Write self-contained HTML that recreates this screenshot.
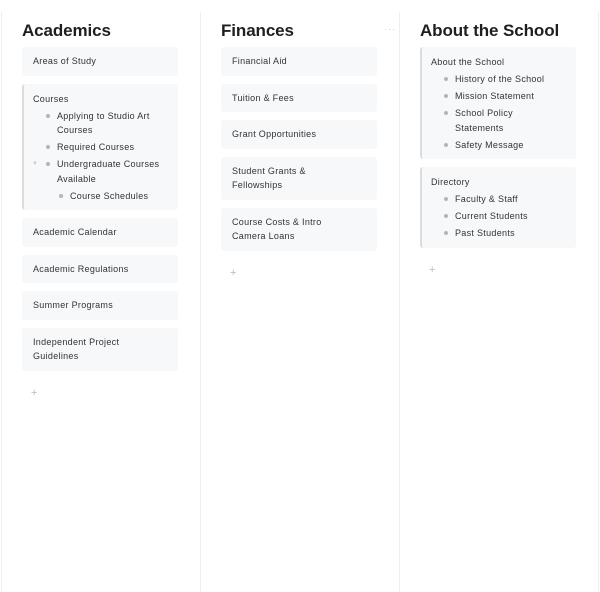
<!DOCTYPE html>
<html><head><style>
*{margin:0;padding:0;box-sizing:border-box}
body{width:600px;height:592px;background:#fff;font-family:"Liberation Sans",sans-serif;position:relative;overflow:hidden;color:#37352f}
.col{position:absolute;top:12px;bottom:0;width:199px;border-left:1px solid #eeeeee}
.col.last{border-right:1px solid #eeeeee}
h1{position:absolute;left:20px;top:9px;line-height:20px;font-size:17px;font-weight:bold;color:#1f1f1f;letter-spacing:-0.1px;white-space:nowrap}
.list{position:absolute;left:20px;top:35px;width:156px}
.card{background:#f7f8f9;border-radius:3px;padding:7px 18px 7px 11px;font-size:9px;line-height:14.5px;margin-bottom:8px;color:#333;letter-spacing:0.3px}
.card.b{border-left:2px solid #dcdcdc;padding-left:9px;padding-top:8px;padding-bottom:7px}
.li{position:relative;padding-left:24px;line-height:14.5px;margin-top:2.5px}
.li:before{content:"";position:absolute;left:13px;top:5px;width:4px;height:4px;border-radius:50%;background:#b5b5b5}
.li2{padding-left:37px}.li2:before{left:26px}
.plus{font-size:11px;color:#bbb;margin-left:9px;margin-top:16px}
.dots{position:absolute;left:183px;top:12px;color:#ccc;font-size:9px;letter-spacing:1px}
</style></head><body>
<div class="col" style="left:1px">
<h1>Academics</h1>
<div class="list">
<div class="card">Areas of Study</div>
<div class="card b">Courses
<div class="li">Applying to Studio Art<br>Courses</div>
<div class="li">Required Courses</div>
<div class="li">Undergraduate Courses<br>Available<span style="position:absolute;left:-1px;top:0;color:#ccc;font-size:6px">▼</span></div>
<div class="li li2">Course Schedules</div>
</div>
<div class="card">Academic Calendar</div>
<div class="card">Academic Regulations</div>
<div class="card">Summer Programs</div>
<div class="card">Independent Project<br>Guidelines</div>
<div class="plus">+</div>
</div></div>
<div class="col" style="left:200px">
<h1>Finances</h1><div class="dots">···</div>
<div class="list">
<div class="card">Financial Aid</div>
<div class="card">Tuition &amp; Fees</div>
<div class="card">Grant Opportunities</div>
<div class="card">Student Grants &amp;<br>Fellowships</div>
<div class="card">Course Costs &amp; Intro<br>Camera Loans</div>
<div class="plus">+</div>
</div></div>
<div class="col last" style="left:399px;width:200px">
<h1>About the School</h1>
<div class="list">
<div class="card b">About the School
<div class="li">History of the School</div>
<div class="li">Mission Statement</div>
<div class="li">School Policy<br>Statements</div>
<div class="li">Safety Message</div>
</div>
<div class="card b">Directory
<div class="li">Faculty &amp; Staff</div>
<div class="li">Current Students</div>
<div class="li">Past Students</div>
</div>
<div class="plus">+</div>
</div></div>
</body></html>
